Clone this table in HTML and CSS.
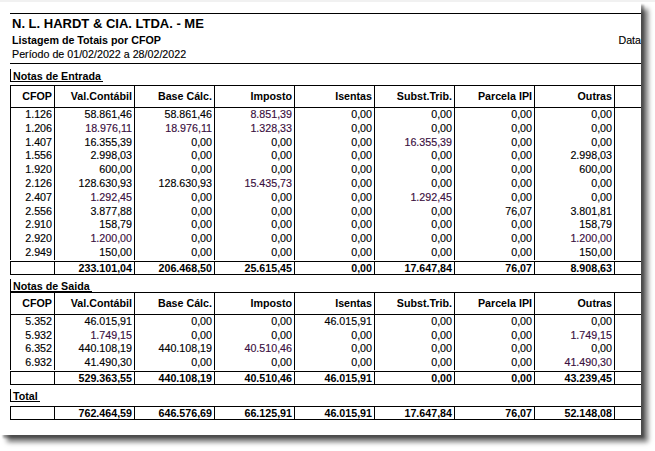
FILE: index.html
```html
<!DOCTYPE html>
<html lang="pt-BR">
<head>
<meta charset="utf-8">
<title>Listagem de Totais por CFOP</title>
<link rel="stylesheet" href="styles.css">
</head>
<body>
<div class="sheet">
  <header class="head">
    <div class="title">N. L. HARDT &amp; CIA. LTDA. - ME</div>
    <div class="subrow"><span class="subtitle">Listagem de Totais por CFOP</span><span class="date">Data</span></div>
    <div class="period">Período de 01/02/2022 a 28/02/2022</div>
  </header>

  <section class="sec sec-in">
    <div class="label">Notas de Entrada</div>
    <div class="grid">
      <div class="row hdr"><span>CFOP</span><span>Val.Contábil</span><span>Base Cálc.</span><span>Imposto</span><span>Isentas</span><span>Subst.Trib.</span><span>Parcela IPI</span><span>Outras</span></div>
      <div class="row"><span>1.126</span><span>58.861,46</span><span>58.861,46</span><span class="p">8.851,39</span><span>0,00</span><span>0,00</span><span>0,00</span><span>0,00</span></div>
      <div class="row"><span>1.206</span><span class="p">18.976,11</span><span class="p">18.976,11</span><span class="p">1.328,33</span><span>0,00</span><span>0,00</span><span>0,00</span><span>0,00</span></div>
      <div class="row"><span>1.407</span><span>16.355,39</span><span>0,00</span><span>0,00</span><span>0,00</span><span class="p">16.355,39</span><span>0,00</span><span>0,00</span></div>
      <div class="row"><span>1.556</span><span>2.998,03</span><span>0,00</span><span>0,00</span><span>0,00</span><span>0,00</span><span>0,00</span><span>2.998,03</span></div>
      <div class="row"><span>1.920</span><span>600,00</span><span>0,00</span><span>0,00</span><span>0,00</span><span>0,00</span><span>0,00</span><span>600,00</span></div>
      <div class="row"><span>2.126</span><span>128.630,93</span><span>128.630,93</span><span class="p">15.435,73</span><span>0,00</span><span>0,00</span><span>0,00</span><span>0,00</span></div>
      <div class="row"><span>2.407</span><span class="p">1.292,45</span><span>0,00</span><span>0,00</span><span>0,00</span><span class="p">1.292,45</span><span>0,00</span><span>0,00</span></div>
      <div class="row"><span>2.556</span><span>3.877,88</span><span>0,00</span><span>0,00</span><span>0,00</span><span>0,00</span><span>76,07</span><span>3.801,81</span></div>
      <div class="row"><span>2.910</span><span>158,79</span><span>0,00</span><span>0,00</span><span>0,00</span><span>0,00</span><span>0,00</span><span>158,79</span></div>
      <div class="row"><span>2.920</span><span class="p">1.200,00</span><span>0,00</span><span>0,00</span><span>0,00</span><span>0,00</span><span>0,00</span><span class="p">1.200,00</span></div>
      <div class="row"><span>2.949</span><span>150,00</span><span>0,00</span><span>0,00</span><span>0,00</span><span>0,00</span><span>0,00</span><span>150,00</span></div>
      <div class="row tot"><span></span><span>233.101,04</span><span>206.468,50</span><span>25.615,45</span><span>0,00</span><span>17.647,84</span><span>76,07</span><span>8.908,63</span></div>
    </div>
  </section>

  <section class="sec sec-out">
    <div class="label">Notas de Saida</div>
    <div class="grid">
      <div class="row hdr"><span>CFOP</span><span>Val.Contábil</span><span>Base Cálc.</span><span>Imposto</span><span>Isentas</span><span>Subst.Trib.</span><span>Parcela IPI</span><span>Outras</span></div>
      <div class="row"><span>5.352</span><span>46.015,91</span><span>0,00</span><span>0,00</span><span>46.015,91</span><span>0,00</span><span>0,00</span><span>0,00</span></div>
      <div class="row"><span>5.932</span><span class="p">1.749,15</span><span>0,00</span><span>0,00</span><span>0,00</span><span>0,00</span><span>0,00</span><span class="p">1.749,15</span></div>
      <div class="row"><span>6.352</span><span>440.108,19</span><span>440.108,19</span><span class="p">40.510,46</span><span>0,00</span><span>0,00</span><span>0,00</span><span>0,00</span></div>
      <div class="row"><span>6.932</span><span>41.490,30</span><span>0,00</span><span>0,00</span><span>0,00</span><span>0,00</span><span>0,00</span><span class="p">41.490,30</span></div>
      <div class="row tot"><span></span><span>529.363,55</span><span>440.108,19</span><span>40.510,46</span><span>46.015,91</span><span>0,00</span><span>0,00</span><span>43.239,45</span></div>
    </div>
  </section>

  <section class="sec sec-total">
    <div class="label">Total</div>
    <div class="grid">
      <div class="row tot"><span></span><span>762.464,59</span><span>646.576,69</span><span>66.125,91</span><span>46.015,91</span><span>17.647,84</span><span>76,07</span><span>52.148,08</span></div>
    </div>
  </section>
</div>
</body>
</html>
```

FILE: styles.css
```css
html, body {
  margin: 0;
  padding: 0;
  background: #ffffff;
}

body {
  border-top: 2px solid #f1f1f1;
  padding-bottom: 20px;
  font-family: "Liberation Sans", Arial, sans-serif;
  color: #000;
}

.sheet {
  box-sizing: border-box;
  width: 641px;
  height: 433px;
  padding: 11px 0 0 10px;
  background: #fff;
  box-shadow: 3px 3px 2px rgba(0, 0, 0, 0.35), 7px 7px 5px rgba(0, 0, 0, 0.55);
  overflow: hidden;
}

.head {
  border-top: 1px solid #000;
  border-bottom: 1px solid #000;
  padding: 2px 0 2px 2px;
}

.title {
  font-weight: bold;
  font-size: 13px;
  line-height: 16px;
}

.subrow {
  display: flex;
  justify-content: space-between;
  margin-top: 2px;
  font-size: 10.7px;
  line-height: 13px;
}

.subtitle {
  font-weight: bold;
}

.period {
  margin-top: 1px;
  font-size: 10.7px;
  line-height: 13px;
  -webkit-text-stroke: 0.15px #000;
}

.date {
  -webkit-text-stroke: 0.15px #000;
}

.label {
  width: fit-content;
  border-left: 1px solid #000;
  border-bottom: 1px solid #000;
  padding: 2px 2px 0 2px;
  font-weight: bold;
  font-size: 10.7px;
  line-height: 10px;
}

.sec-in { margin-top: 5px; }
.sec-in .grid { margin-top: 3px; }
.sec-out { margin-top: 4px; }
.sec-out .grid { margin-top: 0; }
.sec-total { margin-top: 4px; }
.sec-total .grid { margin-top: 4px; }

.row {
  display: grid;
  grid-template-columns: 45px repeat(7, 80px);
  height: 13.8px;
  font-size: 10.7px;
  line-height: 13.8px;
  -webkit-text-stroke: 0.15px currentColor;
}

.row span {
  box-sizing: border-box;
  border-right: 1px solid #000;
  padding-right: 2px;
  text-align: right;
  white-space: nowrap;
  overflow: hidden;
}

.row span:first-child {
  border-left: 1px solid #000;
}

.hdr {
  box-sizing: border-box;
  height: 23px;
  line-height: 21px;
  border-top: 1px solid #000;
  border-bottom: 1px solid #000;
  font-weight: bold;
  -webkit-text-stroke: 0;
}

.tot {
  box-sizing: border-box;
  height: 14px;
  line-height: 12px;
  margin-top: 1px;
  border-top: 1px solid #000;
  border-bottom: 1px solid #000;
  font-weight: bold;
  -webkit-text-stroke: 0;
}

.p {
  color: #3a0f40;
}
```
